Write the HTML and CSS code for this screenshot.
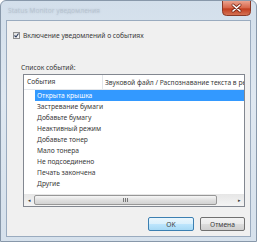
FILE: index.html
```html
<!DOCTYPE html>
<html lang="ru">
<head>
    <meta charset="UTF-8">
    <meta name="viewport" content="width=device-width, initial-scale=1.0">
    <title>Уведомления о событиях</title>
    <link rel="stylesheet" href="styles.css">
</head>
<body>
    <div class="window">
        <div class="titlebar">
            <div class="title">Status Monitor уведомления</div>
            <svg class="close-btn" width="29" height="15" viewBox="0 0 29 15">
                <defs>
                    <linearGradient id="closeFill" x1="0" y1="0" x2="0" y2="1">
                        <stop offset="0" stop-color="#eba38f"/>
                        <stop offset="0.45" stop-color="#d8694d"/>
                        <stop offset="0.55" stop-color="#c23f20"/>
                        <stop offset="1" stop-color="#d57658"/>
                    </linearGradient>
                </defs>
                <path d="M0.5 0 V10.5 Q0.5 14.5 4.5 14.5 H24.5 Q28.5 14.5 28.5 10.5 V0" fill="url(#closeFill)" stroke="#8a3a28"/>
                <path d="M11 4 L18 10 M18 4 L11 10" stroke="#7a2a1a" stroke-width="3" stroke-linecap="round"/>
                <path d="M11 4 L18 10 M18 4 L11 10" stroke="#fff" stroke-width="1.6" stroke-linecap="round"/>
            </svg>
        </div>
        <div class="client">
            <div class="check-row">
                <div class="checkbox">
                    <svg width="5" height="5" viewBox="0 0 5 5">
                        <path d="M0.5 2.5 L2 4 L4.5 0.5" stroke="#2a3a5a" stroke-width="1.1" fill="none"/>
                    </svg>
                </div>
                <span>Включение уведомлений о событиях</span>
            </div>
            <div class="caption">Список событий:</div>
            <div class="listbox">
                <div class="list-header">
                    <div class="col col-events">События</div>
                    <div class="col col-sound">Звуковой файл / Распознавание текста в речь</div>
                </div>
                <div class="rows">
                    <div class="row selected">Открыта крышка</div>
                    <div class="row">Застревание бумаги</div>
                    <div class="row">Добавьте бумагу</div>
                    <div class="row">Неактивный режим</div>
                    <div class="row">Добавьте тонер</div>
                    <div class="row">Мало тонера</div>
                    <div class="row">Не подсоединено</div>
                    <div class="row">Печать закончена</div>
                    <div class="row">Другие</div>
                </div>
                <div class="hscroll">
                    <div class="arrow">&#9666;</div>
                    <div class="thumb"><span class="grip"></span></div>
                    <div class="track"></div>
                    <div class="arrow">&#9656;</div>
                </div>
            </div>
            <div class="buttons">
                <button class="btn btn-default">OK</button>
                <button class="btn">Отмена</button>
            </div>
        </div>
    </div>
</body>
</html>
```

FILE: styles.css
```css
body {
    margin: 0;
    background: #fff;
    font-family: 'Noto Sans', 'Open Sans', sans-serif;
    font-size: 6.7px;
    color: #3a3a3a;
}
.window {
    width: 257px;
    height: 242px;
    box-sizing: border-box;
    display: flex;
    flex-direction: column;
    background: linear-gradient(to bottom, #d3dfeb, #dfe8f1 40%, #d6e1ec);
    border: 1px solid #8898aa;
    border-radius: 6px 6px 0 0;
    padding: 0 5px 4px 5px;
}
.titlebar {
    height: 19px;
    display: flex;
    align-items: flex-start;
}
.title {
    flex: 1;
    margin: 5px 0 0 2px;
    color: rgba(150, 165, 180, 0.3);
    text-shadow: 0 0 2px #b3bfcc;
}
.close-btn {
    flex-shrink: 0;
    display: block;
}
.client {
    flex: 1;
    background: #f0f0f0;
    border: 1px solid #9aabbf;
    padding: 10px 5px 0 6px;
    display: flex;
    flex-direction: column;
}
.check-row {
    display: flex;
    align-items: center;
    gap: 3px;
    height: 8px;
}
.checkbox {
    width: 7px;
    height: 7px;
    box-sizing: border-box;
    border: 1px solid #8f8f8f;
    background: linear-gradient(to bottom right, #dcdcdc, #fafafa);
    display: flex;
    align-items: center;
    justify-content: center;
}
.caption {
    margin: 24px 0 0 8px;
    line-height: 9px;
}
.listbox {
    margin: 2px 0 0 10px;
    height: 133px;
    box-sizing: border-box;
    border: 1px solid #828790;
    background: #fff;
    display: flex;
    flex-direction: column;
    overflow: hidden;
}
.list-header {
    height: 15px;
    display: flex;
    align-items: center;
    border-bottom: 1px solid #e3e6ea;
    box-sizing: border-box;
    white-space: nowrap;
}
.col { overflow: hidden; }
.col-events {
    flex-shrink: 0;
    width: 79px;
    padding-left: 3px;
    box-sizing: border-box;
    border-right: 1px solid #e3e6ea;
    height: 14px;
    line-height: 14px;
}
.col-sound { padding-left: 2px; }
.rows { flex: 1; }
.row {
    height: 11px;
    line-height: 11px;
    margin-left: 11px;
    padding-left: 2px;
    white-space: nowrap;
}
.row.selected {
    background: #3399ff;
    color: #fff;
}
.hscroll {
    height: 12px;
    display: flex;
    background: linear-gradient(to bottom, #e6e6e6, #f4f4f4);
}
.arrow {
    width: 10px;
    text-align: center;
    font-size: 5px;
    line-height: 12px;
    color: #3b3b3b;
}
.thumb {
    width: 183px;
    margin: 1px 0;
    box-sizing: border-box;
    border: 1px solid #979797;
    border-radius: 2px;
    background: linear-gradient(to bottom, #f6f6f6, #e0e0e0 50%, #d2d2d2);
    display: flex;
    align-items: center;
    justify-content: center;
}
.grip {
    width: 5px;
    height: 4px;
    background: repeating-linear-gradient(to right, #777 0 1px, transparent 1px 2px);
}
.track { flex: 1; }
.buttons {
    margin-top: 10px;
    display: flex;
    justify-content: flex-end;
    gap: 6px;
}
.btn {
    width: 45px;
    height: 14px;
    padding: 0;
    font-family: inherit;
    font-size: 6.7px;
    color: #3a3a3a;
    border: 1px solid #707070;
    border-radius: 2px;
    background: linear-gradient(to bottom, #f2f2f2, #ebebeb 50%, #dddddd 50%, #cfcfcf);
}
.btn-default {
    width: 46px;
    border-color: #3c7fb1;
    background: linear-gradient(to bottom, #eaf6fd, #d9f0fc 50%, #bee6fd 50%, #a7d9f5);
}
```
